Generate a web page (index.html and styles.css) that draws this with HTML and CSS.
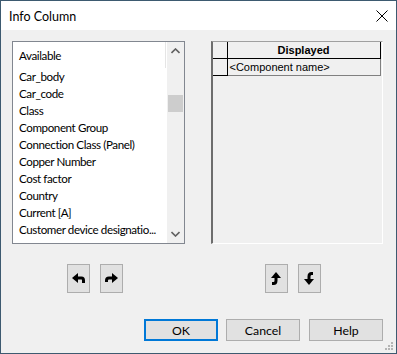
FILE: index.html
```html
<!DOCTYPE html>
<html>
<head>
<meta charset="utf-8">
<link rel="stylesheet" href="styles.css">
</head>
<body>
<div class="window">
  <div class="titlebar">
    <span class="title">Info Column</span>
    <svg class="close" width="12" height="12" viewBox="0 0 12 12"><path d="M0.5 0.5 L11.5 11.5 M11.5 0.5 L0.5 11.5" stroke="#000" stroke-width="1" fill="none"/></svg>
  </div>
  <div class="content">
    <div class="panels">
      <div class="listbox">
        <div class="list">
          <div class="list-head">Available</div>
          <div class="item">Car_body</div>
          <div class="item">Car_code</div>
          <div class="item">Class</div>
          <div class="item">Component Group</div>
          <div class="item">Connection Class (Panel)</div>
          <div class="item">Copper Number</div>
          <div class="item">Cost factor</div>
          <div class="item">Country</div>
          <div class="item">Current [A]</div>
          <div class="item">Customer device designatio...</div>
        </div>
        <div class="scrollbar">
          <svg class="sb-arrow" width="9" height="6" viewBox="0 0 9 6"><path d="M0.5 5 L4.5 1 L8.5 5" stroke="#606060" stroke-width="1.6" fill="none"/></svg>
          <div class="sb-track"><div class="sb-thumb"></div></div>
          <svg class="sb-arrow" width="9" height="6" viewBox="0 0 9 6"><path d="M0.5 1 L4.5 5 L8.5 1" stroke="#606060" stroke-width="1.6" fill="none"/></svg>
        </div>
      </div>
      <div class="grid">
        <div class="grid-row head">
          <div class="rh"></div>
          <div class="cell hcell">Displayed</div>
        </div>
        <div class="grid-row">
          <div class="rh"></div>
          <div class="cell">&lt;Component name&gt;</div>
        </div>
      </div>
    </div>
    <div class="arrows">
      <div class="pair">
        <div class="abtn"><svg width="13" height="11" viewBox="0 0 13 11"><polygon points="0,5 6,0 6,10" fill="#000"/><path d="M5 5 H9.5 Q11.5 5 11.5 7.5 V10" stroke="#000" stroke-width="3" fill="none"/></svg></div>
        <div class="abtn"><svg width="13" height="11" viewBox="0 0 13 11"><polygon points="13,5 7,0 7,10" fill="#000"/><path d="M8 5 H4 Q1.5 5 1.5 7.5 V9" stroke="#000" stroke-width="3" fill="none"/></svg></div>
      </div>
      <div class="pair">
        <div class="abtn"><svg width="11" height="13" viewBox="0 0 11 13"><polygon points="5,0 0,6 10,6" fill="#000"/><path d="M5 5 V8.5 Q5 11.5 2.5 11.5 H1" stroke="#000" stroke-width="3" fill="none"/></svg></div>
        <div class="abtn"><svg width="11" height="13" viewBox="0 0 11 13"><polygon points="5,13 0,7 10,7" fill="#000"/><path d="M5 8 V4.5 Q5 1.5 7.5 1.5 H9" stroke="#000" stroke-width="3" fill="none"/></svg></div>
      </div>
    </div>
    <div class="buttons">
      <div class="btn default">OK</div>
      <div class="btn cancel">Cancel</div>
      <div class="btn help">Help</div>
    </div>
  </div>
  <svg class="grip" width="8" height="8" viewBox="0 0 8 8" fill="#b4b4b4"><rect x="6" y="0" width="2" height="2"/><rect x="3" y="3" width="2" height="2"/><rect x="6" y="3" width="2" height="2"/><rect x="0" y="6" width="2" height="2"/><rect x="3" y="6" width="2" height="2"/><rect x="6" y="6" width="2" height="2"/></svg>
</div>
</body>
</html>
```
FILE: styles.css
```css
html, body { margin: 0; padding: 0; }
body { width: 397px; height: 354px; overflow: hidden; font-family: Lato, "Noto Sans", sans-serif; font-size: 12px; color: #000; }
.window { position: relative; box-sizing: border-box; width: 397px; height: 354px; border: 1px solid #3d5a70; background: #f0f0f0; display: flex; flex-direction: column; }
.titlebar { height: 29px; background: #fff; display: flex; align-items: center; justify-content: space-between; padding: 0 8px 0 8px; }
.title { font-size: 12.5px; padding-top: 1px; }
.content { flex: 1; display: flex; flex-direction: column; padding: 11px 13px 0 11px; }
.panels { display: flex; gap: 26px; height: 203px; }
.listbox { width: 173px; box-sizing: border-box; border: 1px solid #828790; background: #fff; display: flex; }
.list { flex: 1; overflow: hidden; font-size: 11.6px; letter-spacing: -0.4px; }
.list-head { height: 26px; line-height: 27px; padding-left: 6px; border-right: 1px solid #e5e5e5; width: 153px; box-sizing: border-box; }
.item { height: 17px; line-height: 18px; padding-left: 6px; white-space: nowrap; }
.scrollbar { width: 17px; background: #f0f0f0; display: flex; flex-direction: column; align-items: center; }
.sb-arrow { margin: 6px 0; flex: none; }
.sb-track { flex: 1; width: 100%; position: relative; }
.sb-thumb { margin: 35px 1px 0 1px; height: 17px; background: #cdcdcd; }
.grid { width: 173px; box-sizing: border-box; border-top: 1px solid #a0a0a0; border-left: 2px solid #6d6d6d; border-right: 1px solid #fff; border-bottom: 1px solid #fff; background: #f0f0f0; font-family: "Liberation Sans", Arial, sans-serif; font-size: 11px; }
.grid-row { display: flex; height: 17px; }
.rh { width: 14px; border-right: 1px solid #000; border-bottom: 1px solid #000; }
.cell { border-right: 1px solid #808080; border-bottom: 1px solid #808080; padding-left: 2px; line-height: 16px; box-sizing: border-box; width: 153px; }
.hcell { font-weight: bold; text-align: center; border-bottom-color: #000; border-right-color: #000; padding-left: 0; }
.arrows { display: flex; padding-top: 20px; }
.pair { display: flex; gap: 10px; }
.pair:first-child { margin-left: 55px; }
.pair:last-child { margin-left: 142px; }
.abtn { width: 23px; height: 29px; box-sizing: border-box; border: 1px solid #adadad; background: #e1e1e1; display: flex; align-items: center; justify-content: center; }
.buttons { display: flex; justify-content: flex-end; padding-top: 26px; }
.btn { width: 74px; height: 22px; box-sizing: border-box; border: 1px solid #adadad; background: #e1e1e1; display: flex; align-items: center; justify-content: center; font-size: 12.3px; }
.btn.default { border: 2px solid #0078d7; }
.cancel { margin-left: 8px; }
.help { margin-left: 9px; }
.grip { position: absolute; right: 3px; bottom: 3px; }
```
